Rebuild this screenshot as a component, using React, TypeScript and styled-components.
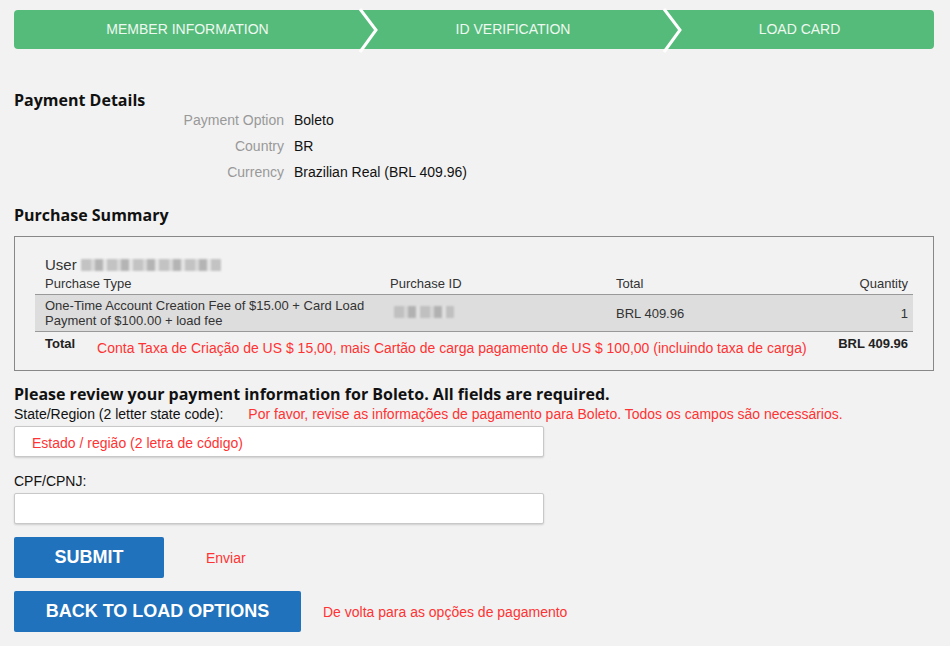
import React from "react";
import styled, { createGlobalStyle } from "styled-components";

const Global = createGlobalStyle`
  html, body { margin: 0; padding: 0; background: #f2f2f2; }
  body { font-family: "Liberation Sans", Arial, sans-serif; color: #111; }
  * { box-sizing: border-box; }
`;

const Page = styled.div`
  padding: 10px 16px 0 14px;
  width: 950px;
`;

const Steps = styled.div`
  display: flex;
  height: 39px;
`;

const Step = styled.div<{ $w?: number; $first?: boolean; $last?: boolean }>`
  position: relative;
  flex: ${(p) => (p.$w ? `0 0 ${p.$w}px` : "1 1 auto")};
  background: #55bb7a;
  color: #eef8f1;
  font-size: 14px;
  display: flex;
  align-items: center;
  justify-content: center;
  padding-bottom: 1px;
  border-radius: ${(p) => (p.$first ? "4px 0 0 4px" : p.$last ? "0 4px 4px 0" : "0")};
`;

const Chevron = styled.svg`
  position: absolute;
  right: -18px;
  top: 0;
  width: 20px;
  height: 43px;
  z-index: 2;
  overflow: visible;
`;

const Section = styled.h2`
  font-family: "Open Sans", sans-serif;
  font-weight: 700;
  font-size: 16px;
  line-height: 20px;
  margin: 0;
  color: #111;
`;

const Details = styled.div`
  display: grid;
  grid-template-columns: 270px auto;
  column-gap: 10px;
  row-gap: 9px;
  font-size: 14px;
  margin-top: 2px;
  line-height: 17px;
`;

const DLabel = styled.div`
  color: #999;
  text-align: right;
`;

const DValue = styled.div`
  color: #111;
`;

const Box = styled.div`
  border: 1px solid #888;
  margin-top: 11px;
  padding: 20px 20px 14px 20px;
  width: 920px;
`;

const UserLine = styled.div`
  font-size: 15px;
  color: #333;
  padding-left: 10px;
  display: flex;
  align-items: center;
  line-height: 18px;
  margin-top: -1px;
  margin-bottom: 2px;
`;

const Blur = styled.span<{ $w: number }>`
  display: inline-block;
  width: ${(p) => p.$w}px;
  height: 12px;
  margin-left: 4px;
  background: repeating-linear-gradient(90deg, #bbb 0 10px, #d4d4d4 10px 14px, #aaa 14px 22px, #e2e2e2 22px 26px);
  filter: blur(1.2px);
  opacity: 0.85;
`;

const Table = styled.table`
  width: 100%;
  border-collapse: collapse;
  table-layout: fixed;
  font-size: 13px;
  color: #333;
`;

const Th = styled.th<{ $right?: boolean }>`
  font-weight: normal;
  text-align: ${(p) => (p.$right ? "right" : "left")};
  padding: 0 5px 2px 10px;
  border-bottom: 1px solid #999;
  line-height: 16px;
`;

const Row = styled.tr`
  background: #dddddd;
  border-bottom: 1px solid #999;
`;

const Td = styled.td<{ $right?: boolean }>`
  text-align: ${(p) => (p.$right ? "right" : "left")};
  padding: 3px 5px 3px 10px;
  line-height: 15px;
  vertical-align: middle;
`;

const TotalCell = styled.td<{ $right?: boolean }>`
  text-align: ${(p) => (p.$right ? "right" : "left")};
  padding: 4px 5px 0 10px;
  vertical-align: top;
  font-weight: bold;
  font-size: 13px;
  color: #222;
`;

const TotalLine = styled.div`
  display: flex;
  align-items: flex-start;
`;

const Red = styled.span<{ $size?: number; $ml?: number; $mt?: number }>`
  color: #ff3333;
  font-weight: normal;
  font-size: ${(p) => p.$size ?? 14}px;
  margin-left: ${(p) => p.$ml ?? 0}px;
  margin-top: ${(p) => p.$mt ?? 0}px;
  white-space: nowrap;
`;

const Label = styled.div`
  font-size: 14px;
  color: #111;
  display: flex;
  align-items: baseline;
  line-height: 16px;
`;

const Input = styled.div`
  width: 530px;
  height: 31px;
  background: #fff;
  border: 1px solid #c8c8c8;
  border-radius: 2px;
  box-shadow: 0 1px 2px rgba(0, 0, 0, 0.15);
  display: flex;
  align-items: center;
  padding: 2px 0 0 17px;
  margin-top: 4px;
`;

const ButtonRow = styled.div`
  display: flex;
  align-items: center;
`;

const Button = styled.button<{ $w: number }>`
  width: ${(p) => p.$w}px;
  height: 41px;
  background: #1f72bb;
  color: #fff;
  border: none;
  border-radius: 2px;
  font-family: "Liberation Sans", Arial, sans-serif;
  font-weight: bold;
  font-size: 18px;
  padding: 0;
`;

const Spacer = styled.div<{ $h: number }>`
  height: ${(p) => p.$h}px;
`;

function Chev() {
  return (
    <Chevron viewBox="0 0 20 43">
      <polyline points="1,-1 17,20 1,42" fill="none" stroke="#fff" strokeWidth="3" />
    </Chevron>
  );
}

export default function App() {
  return (
    <>
      <Global />
      <Page>
        <Steps>
          <Step $w={347} $first>
            MEMBER INFORMATION
            <Chev />
          </Step>
          <Step $w={304}>
            ID VERIFICATION
            <Chev />
          </Step>
          <Step $last>LOAD CARD</Step>
        </Steps>

        <Spacer $h={41} />
        <Section>Payment Details</Section>
        <Details>
          <DLabel>Payment Option</DLabel>
          <DValue>Boleto</DValue>
          <DLabel>Country</DLabel>
          <DValue>BR</DValue>
          <DLabel>Currency</DLabel>
          <DValue>Brazilian Real (BRL 409.96)</DValue>
        </Details>

        <Spacer $h={24} />
        <Section>Purchase Summary</Section>
        <Box>
          <UserLine>
            User <Blur $w={140} />
          </UserLine>
          <Table>
            <colgroup>
              <col style={{ width: 345 }} />
              <col style={{ width: 226 }} />
              <col style={{ width: 194 }} />
              <col />
            </colgroup>
            <thead>
              <tr>
                <Th>Purchase Type</Th>
                <Th>Purchase ID</Th>
                <Th>Total</Th>
                <Th $right>Quantity</Th>
              </tr>
            </thead>
            <tbody>
              <Row>
                <Td>One-Time Account Creation Fee of $15.00 + Card Load Payment of $100.00 + load fee</Td>
                <Td>
                  <Blur $w={60} />
                </Td>
                <Td>BRL 409.96</Td>
                <Td $right>1</Td>
              </Row>
              <tr>
                <TotalCell colSpan={3}>
                  <TotalLine>
                    Total
                    <Red $ml={22} $mt={4}>
                      Conta Taxa de Criação de US $ 15,00, mais Cartão de carga pagamento de US $ 100,00 (incluindo taxa de carga)
                    </Red>
                  </TotalLine>
                </TotalCell>
                <TotalCell $right>BRL 409.96</TotalCell>
              </tr>
            </tbody>
          </Table>
        </Box>

        <Spacer $h={13} />
        <Section>Please review your payment information for Boleto. All fields are required.</Section>
        <Spacer $h={2} />
        <Label>
          State/Region (2 letter state code):
          <Red $ml={25}>
            Por favor, revise as informações de pagamento para Boleto. Todos os campos são necessários.
          </Red>
        </Label>
        <Input>
          <Red>Estado / região (2 letra de código)</Red>
        </Input>
        <Spacer $h={16} />
        <Label>CPF/CPNJ:</Label>
        <Input />

        <Spacer $h={13} />
        <ButtonRow>
          <Button $w={150}>SUBMIT</Button>
          <Red $ml={42}>Enviar</Red>
        </ButtonRow>
        <Spacer $h={13} />
        <ButtonRow>
          <Button $w={287}>BACK TO LOAD OPTIONS</Button>
          <Red $ml={22}>De volta para as opções de pagamento</Red>
        </ButtonRow>
      </Page>
    </>
  );
}
